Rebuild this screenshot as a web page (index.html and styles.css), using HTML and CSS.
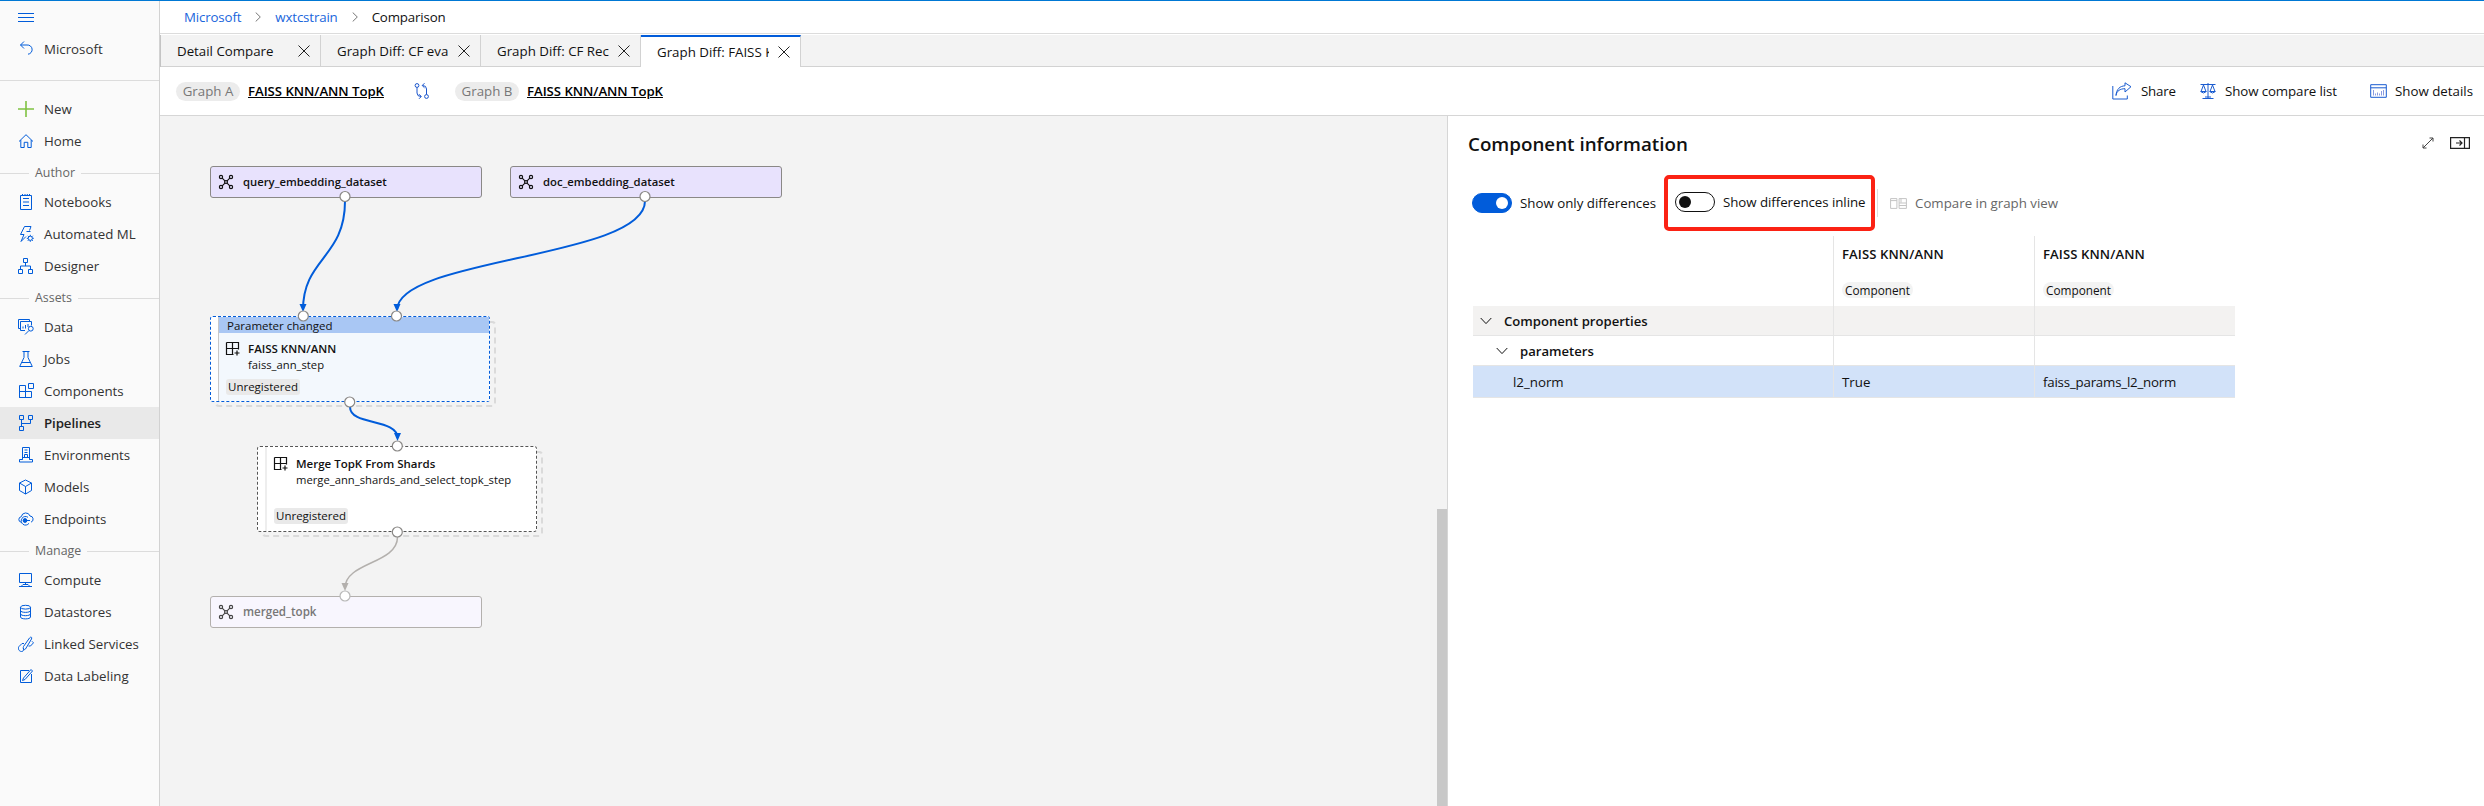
FILE: index.html
```html
<!DOCTYPE html>
<html lang="en">
<head>
<meta charset="utf-8">
<title>Comparison</title>
<link rel="stylesheet" href="styles.css">
</head>
<body>
<svg class="defs" width="0" height="0">
  <symbol id="close" viewBox="0 0 12 12"><path d="M.5.5l11 11M11.5.5l-11 11"/></symbol>
  <symbol id="chev" viewBox="0 0 6 10"><path d="M.7.5L5.3 5 .7 9.5"/></symbol>
  <symbol id="down" viewBox="0 0 12 8"><path d="M.7 1L6 6.6 11.3 1"/></symbol>
  <symbol id="dataset" viewBox="0 0 16 16"><g stroke-width="1.2"><circle cx="3" cy="3" r="1.6"/><circle cx="13" cy="3" r="1.6"/><circle cx="3" cy="13" r="1.6"/><circle cx="13" cy="13" r="1.6"/><rect x="6.7" y="6.7" width="2.6" height="2.6"/><path d="M4.2 4.2l2.5 2.5M11.8 4.2L9.3 6.7M4.2 11.8l2.5-2.5M11.8 11.8L9.3 9.3"/></g></symbol>
  <symbol id="module" viewBox="0 0 16 16"><path d="M1.500 1.500h12v7M1.500 1.500v12h7M1.500 7.500h12M7.500 1.500v12M12 9.500v5M9.500 12h5" stroke-width="1.2"/></symbol>
</svg>
<div class="app">
  <nav class="side">
    <div class="item menu"><svg class="ic" viewBox="0 0 16 16"><path d="M0 4.500h16M0 8.500h16M0 12.500h16"/></svg></div>
    <div class="item back"><svg class="ic" viewBox="0 0 16 16"><path d="M6 1.500L2.500 5 6 8.500M2.500 5H9a4.600 4.600 0 0 1 1 9.200"/></svg><span>Microsoft</span></div>
    <div class="rule"></div>
    <div class="item"><svg class="ic plus" viewBox="0 0 16 16"><path d="M0 8h16M8 0v16"/></svg><span>New</span></div>
    <div class="item"><svg class="ic" viewBox="0 0 16 16"><path d="M1 8.500L8 1.700l7 6.800M2.800 7v7.500h3.400V9.300h3.600v5.200h3.400V7"/></svg><span>Home</span></div>
    <div class="sep"><span>Author</span></div>
    <div class="item"><svg class="ic" viewBox="0 0 16 16"><path d="M2.500 1.500h11v14h-11zM5 4.500h6M5 8h6M5 11.500h6M4.500 0v2M7 0v2M9.300 0v2M11.500 0v2"/></svg><span>Notebooks</span></div>
    <div class="item"><svg class="ic" viewBox="0 0 16 16"><path d="M11.500 4.500L13 .5H6.500L2.500 8.500h3.500L3 15.500l5-5M8.500 5.500h4"/><circle cx="12.300" cy="12.300" r="2.100"/><path d="M12.300 8.800v1.300M12.300 14.500v1.300M8.800 12.300h1.300M14.500 12.300h1.300M9.800 9.800l1 1M13.800 13.800l1 1M14.800 9.800l-1 1M10.800 13.800l-1 1"/></svg><span>Automated ML</span></div>
    <div class="item"><svg class="ic" viewBox="0 0 16 16"><path d="M5.500.5h4v4h-4zM.5 11.500h4v4h-4zM10.500 11.500h4v4h-4zM7.500 4.500V8M2.500 11.500V8h10v3.500"/></svg><span>Designer</span></div>
    <div class="sep"><span>Assets</span></div>
    <div class="item"><svg class="ic" viewBox="0 0 16 16"><path d="M3 9.500H.5v-9h11V2M7 11.500H2.500v-9h11v4M5 9.500v-2M7.500 9.500v-3.500M10 8V5"/><circle cx="12.800" cy="9.700" r="2.400"/><path d="M11 11.500l-4 4"/></svg><span>Data</span></div>
    <div class="item"><svg class="ic" viewBox="0 0 16 16"><path d="M4.500.5h7M6 .5v6L1.700 15.500h12.600L10 6.500v-6M3.800 11.500h8.400"/></svg><span>Jobs</span></div>
    <div class="item"><svg class="ic" viewBox="0 0 16 16"><path d="M1.500 2.500h6v12h-6zM1.500 8.500h12v6h-12zM10.500.5h5v5h-5z"/></svg><span>Components</span></div>
    <div class="item on"><svg class="ic" viewBox="0 0 16 16"><path d="M1.500.5h4v4h-4zM10.500.5h4v4h-4zM1.500 11.500h4v4h-4zM3.500 4.500v7M3.500 8.500h9v-4"/></svg><span>Pipelines</span></div>
    <div class="item"><svg class="ic" viewBox="0 0 16 16"><path d="M4.500 12.500V.5h7v12M6.500 3h3M6.500 5.500h3M1.500 15v-2.500h3v-2h7v2h3V15zM6.500 10.500v-3h3v3"/></svg><span>Environments</span></div>
    <div class="item"><svg class="ic" viewBox="0 0 16 16"><path d="M7.500 1l6 3v7.500l-6 3.500-6-3.500V4zM1.500 4l6 3.500 6-3.500M7.500 7.500V15"/></svg><span>Models</span></div>
    <div class="item"><svg class="ic" viewBox="0 0 16 16"><path d="M3 11.200A2.800 2.800 0 0 1 3.300 5.700a4.500 4.500 0 0 1 8.700-.7 3.200 3.200 0 0 1 1 6.200M11 12.300a4.300 4.300 0 1 1-1-6"/><circle cx="7" cy="9.500" r="1.900" fill="#015cda"/><path d="M7 9.500h5"/></svg><span>Endpoints</span></div>
    <div class="sep"><span>Manage</span></div>
    <div class="item"><svg class="ic" viewBox="0 0 16 16"><path d="M1.500 1.500h12v9h-12zM7.500 10.500v2M3 14.500l2-2h5l2 2zM1 14.500h13"/></svg><span>Compute</span></div>
    <div class="item"><svg class="ic" viewBox="0 0 16 16"><ellipse cx="7.500" cy="3.200" rx="5" ry="1.900"/><path d="M2.500 3.200v9.800c0 2.500 10 2.500 10 0V3.200M2.500 6.500c0 2.500 10 2.500 10 0M2.500 9.800c0 2.500 10 2.500 10 0"/></svg><span>Datastores</span></div>
    <div class="item"><svg class="ic" viewBox="0 0 16 16"><path d="M5.500 10.500l6-8.500c1-1.500 3-1 2 1L7.500 13c-1 1.500-3 0-2-2.500zM6 7.500H4L1 10.500c-1.500 2 0 5 2.500 5s2-2 2-3.500M10.500 10h2l3-3.200-1.500-1.500"/></svg><span>Linked Services</span></div>
    <div class="item"><svg class="ic" viewBox="0 0 16 16"><path d="M11 2.500H2.500v12h11V6M13 1.500l1.500 1.500-7.500 8.500-2.500 1 1-2.500z"/></svg><span>Data Labeling</span></div>
  </nav>
  <main class="main">
    <div class="crumbs"><a>Microsoft</a><svg class="chev" width="6" height="10"><use href="#chev"/></svg><a>wxtcstrain</a><svg class="chev" width="6" height="10"><use href="#chev"/></svg><span>Comparison</span></div>
    <div class="tabs">
      <div class="tab first"><span>Detail Compare</span><svg width="12" height="12"><use href="#close"/></svg></div>
      <div class="tab"><span>Graph Diff: CF eva</span><svg width="12" height="12"><use href="#close"/></svg></div>
      <div class="tab"><span>Graph Diff: CF Rec</span><svg width="12" height="12"><use href="#close"/></svg></div>
      <div class="tab active"><span>Graph Diff: FAISS K</span><svg width="12" height="12"><use href="#close"/></svg></div>
    </div>
    <div class="bar">
      <span class="pill">Graph A</span><a class="gname">FAISS KNN/ANN TopK</a>
      <svg class="swap" width="16" height="18" viewBox="0 0 16 18"><circle cx="3" cy="3.500" r="1.900"/><path d="M3 5.400v5.600q0 3.500 4 3.500M5 12.200l2.300 2.300L5 16.800M12.500 12.500V7q0-3.500-4-3.500M10.500 1.200L8.200 3.500l2.300 2.300"/><circle cx="12.500" cy="14.500" r="1.900"/></svg>
      <span class="pill">Graph B</span><a class="gname">FAISS KNN/ANN TopK</a>
      <div class="acts">
        <div class="act"><svg width="20" height="18" viewBox="0 0 20 18"><path d="M.8 4v13h14.500v-3.500M4 13.500c.7-4.500 4-6.800 9-6.800V10l6-5.300L13 .8v3C8 4 4.500 7 4 13.500z"/></svg><span class="a1">Share</span></div>
        <div class="act"><svg width="16" height="17" viewBox="0 0 16 17"><path d="M.5 1.500h15M8 0v16M2.500 15.500h11M5 14h6M3.500 2l-2.500 6.500h5zM12.500 2L10 8.500h5zM.5 8.500q3 3 6 0M9.500 8.500q3 3 6 0"/></svg><span class="a2">Show compare list</span></div>
        <div class="act"><svg width="17" height="14" viewBox="0 0 17 14"><path d="M.7.7h15.600v12.600H.7zM.7 3.800h15.600"/><path class="faint" d="M3.500 6v5.500M5.500 9.500v2M7.500 8.500v3M9.500 9.500v2M11.500 7v4.500M13.500 6v5.500"/></svg><span class="a3">Show details</span></div>
      </div>
    </div>
    <div class="work">
      <div class="canvas">
        <div class="shadow sh1"></div><div class="shadow sh2"></div>
        <div class="node data n1"><svg width="16" height="16"><use href="#dataset"/></svg><span>query_embedding_dataset</span></div>
        <div class="node data n2"><svg width="16" height="16"><use href="#dataset"/></svg><span>doc_embedding_dataset</span></div>
        <div class="node step n3">
          <div class="body">
            <div class="band">Parameter changed</div>
            <div class="row"><svg width="16" height="16"><use href="#module"/></svg><div><b>FAISS KNN/ANN</b><p>faiss_ann_step</p></div></div>
            <span class="tag">Unregistered</span>
          </div>
        </div>
        <div class="node step n4">
          <div class="body">
            <div class="row"><svg width="16" height="16"><use href="#module"/></svg><div><b>Merge TopK From Shards</b><p>merge_ann_shards_and_select_topk_step</p></div></div>
            <span class="tag">Unregistered</span>
          </div>
        </div>
        <div class="node data n5 dim"><svg width="16" height="16"><use href="#dataset"/></svg><span>merged_topk</span></div>
        <svg class="edges" width="1277" height="690" viewBox="160 116 1277 690">
          <g class="e"><path d="M345 201C345 258 303 258 303 310"/><path d="M645 201C645 258 397 258 397 310"/><path d="M350 407C350 426 397.500 418 397.500 438"/></g>
          <g class="h"><path d="M299.500 304h7l-3.500 8zM393.500 304h7l-3.500 8zM394 433h7l-3.500 8z"/></g>
          <path class="eg" d="M397.500 537C397.500 564 345 562 345 588"/><path class="hg" d="M341.500 583h7l-3.500 8z"/>
          <g class="p"><circle cx="345" cy="196.500" r="5"/><circle cx="645" cy="196.500" r="5"/><circle cx="303.300" cy="316" r="5"/><circle cx="396.500" cy="316" r="5"/><circle cx="349.700" cy="402" r="5"/><circle cx="397.300" cy="446" r="5"/><circle cx="397.300" cy="532" r="5"/><circle class="pg" cx="345" cy="596" r="5"/></g>
        </svg>
        <div class="scroll"></div>
      </div>
      <section class="panel">
        <header class="head"><h2>Component information</h2>
          <svg width="12" height="12" viewBox="0 0 12 12"><path d="M1 11L11 1M7.500 1H11v3.500M1 7.500V11h3.500"/></svg>
          <svg class="dock" width="20" height="12" viewBox="0 0 20 12"><path d="M.6.6h18.800v10.800H.6zM14.500.6v10.800M6 6h6M9.500 3.500L12 6 9.500 8.500"/></svg>
        </header>
        <div class="toggles">
          <span class="sw onn"><i></i></span><span class="t1">Show only differences</span>
          <div class="box"><span class="sw"><i></i></span><span>Show differences inline</span></div>
          <div class="cmp"><svg width="17" height="11" viewBox="0 0 17 11"><path d="M.6.6h6.300v9.800H.6zM.6 2.600h6.300M9.100.6h7.300v9.800H9.100zM9.100 5h7.300M9.100 7.500h7.300M11 .6v4"/></svg><span>Compare in graph view</span></div>
        </div>
        <div class="grid">
          <div class="cell hd"></div>
          <div class="cell hd"><b>FAISS KNN/ANN</b><span class="chip">Component</span></div>
          <div class="cell hd"><b>FAISS KNN/ANN</b><span class="chip">Component</span></div>
          <div class="cell g lv1"><svg width="12" height="8"><use href="#down"/></svg><b>Component properties</b></div><div class="cell g"></div><div class="cell g"></div>
          <div class="cell lv2"><svg width="12" height="8"><use href="#down"/></svg><b>parameters</b></div><div class="cell"></div><div class="cell"></div>
          <div class="cell s lv3">l2_norm</div><div class="cell s">True</div><div class="cell s last">faiss_params_l2_norm</div>
        </div>
      </section>
    </div>
  </main>
</div>
</body>
</html>
```
FILE: styles.css
```css
*{box-sizing:border-box}
body{margin:0;font-family:"Open Sans","Noto Sans",sans-serif;font-size:13.3px;line-height:20px;color:#111;background:#fff}
span,a,b,p{white-space:nowrap}
svg{fill:none;stroke:currentColor;flex:none;display:block}
.defs{position:absolute}
.app{height:806px;display:flex;border-top:1px solid #0078d4;overflow:hidden}
.side{width:160px;flex:none;background:#fafafa;border-right:1px solid #d2d2d2;color:#333}
.item{height:32px;display:flex;align-items:center;padding-left:18px;gap:10px}
.item .ic{width:16px;height:16px;color:#015cda}
.item .plus{color:#7fc241;stroke-width:1.6}
.back .ic{margin-top:-2px}
.rule{height:1px;background:#dcdcdc;margin:15px 0 12px}
.sep{height:29px;display:flex;align-items:center;font-size:12.4px;color:#666;gap:6px;padding-top:4px}
.sep span{margin-top:-2px}
.sep::before{content:"";width:29px;height:1px;background:#dcdcdc}
.sep::after{content:"";flex:1;height:1px;background:#dcdcdc}
.on{background:#e9e9e9;font-weight:600;color:#222}
.on span{letter-spacing:-.1px}
.main{flex:1;min-width:0;display:flex;flex-direction:column}
.crumbs{height:33px;border-bottom:1px solid #dcdcdc;padding-left:24px;display:flex;align-items:center;letter-spacing:-.15px}
.crumbs a{color:#1a66dc}
.chev{color:#777;margin:0 14px}
.tabs{height:32px;margin-top:1px;display:flex;background:#f3f3f3;box-shadow:inset 0 -1px #d2d2d2}
.tab{width:160px;border-right:1px solid #d2d2d2;display:flex;align-items:center;justify-content:space-between;padding:0 10px 1px 16px}
.tab.first{width:161px;border-left:1px solid #c4c4c4}
.tab span{max-width:112px;overflow:hidden}
.tab.active{background:#fff;border-top:2px solid #015cda}
.tab svg{color:#222}
.bar{height:49px;border-bottom:1px solid #d6d6d6;display:flex;align-items:center;padding:0 12px 0 16px}
.pill{background:#ececec;color:#777;border-radius:10px;height:19px;line-height:19px;width:64px;text-align:center;margin-right:8px}
.gname{font-weight:600;font-size:13.2px;letter-spacing:-.05px;color:#000;width:141px;text-decoration:underline}
.swap{color:#1a55cc;margin:0 25px 0 25px}
.acts{margin-left:auto;display:flex}
.act{display:flex;align-items:center;gap:9px}
.act svg{color:#1a5cd0}
.a1{width:59px;letter-spacing:-.2px}
.a2{width:145px;letter-spacing:-.1px}
.a3{width:77px;margin-left:-1px}
.faint{stroke:#8a9be0}
.work{flex:1;display:flex;min-height:0}
.canvas{width:1287px;flex:none;background:#f3f3f3;position:relative;overflow:hidden}
.edges{position:absolute;left:0;top:0}
.e{stroke:#015cda;stroke-width:2}
.h{stroke:none;fill:#015cda}
.eg{stroke:#b3b0ad;stroke-width:1.5}
.hg{stroke:none;fill:#b3b0ad}
.p{fill:#fff;stroke:#8a8886;stroke-width:1.2}
.pg{stroke:#b8b8b8}
.node{position:absolute}
.data{width:272px;height:32px;border:1px solid #8a8886;border-radius:3px;background:#e8e2fd;display:flex;align-items:center;gap:9px;padding-left:7px;font-size:11.3px;font-weight:600}
.n1{left:50px;top:50px}
.n2{left:350px;top:50px}
.n3{left:50px;top:200px}
.n4{left:97px;top:330px}
.n5{left:50px;top:480px}
.dim{background:#f8f6fe;border-color:#b3b0ad;color:#777;font-size:11.6px}
.dim svg{color:#444}
.step{width:280px;height:86px;border:1px dashed #555;border-radius:3px;background:#fff;padding-left:7px;font-size:11.5px}
.n3{border-color:#015cda}
.n3 .body{background:#f3f8fd;border-left:1px solid #c8c8c8}
.body{height:84px;border-left:2px solid #eee;display:flex;flex-direction:column}
.band{height:16px;line-height:17px;background:#a9c7f4;padding-left:8px}
.row{display:flex;gap:7px;padding:8px 0 0 6px;height:46px}
.row b{font-weight:600;display:block;line-height:16px}
.row p{margin:0;line-height:15px;font-size:11.25px}
.n4 .row{height:61px;padding-left:6px;padding-top:9px}
.tag{background:#e9e9e9;border-radius:3px;width:74px;height:16px;line-height:16px;text-align:center;margin-left:7px}
.shadow{position:absolute;width:281px;height:86px;border:2px dashed #dadada;border-radius:4px}
.sh1{left:55px;top:205px}
.sh2{left:102px;top:335px}
.scroll{position:absolute;right:0;top:393px;width:10px;height:297px;background:#c8c8c8}
.panel{flex:1;border-left:1px solid #d6d6d6;padding:14px 14px 0 20px;min-width:0}
.head{display:flex;align-items:center;height:28px;gap:16px;color:#444}
.head h2{margin:0 auto 0 0;font-size:18.8px;font-weight:600;color:#111;line-height:28px}
.head svg{stroke-width:1;margin-top:-2px}
.head .dock{color:#222;stroke-width:1.2}
.toggles{display:flex;align-items:center;margin-top:17px;height:56px;padding-left:4px}
.sw{width:40px;height:20px;border:1px solid #111;border-radius:10px;display:flex;align-items:center;padding:0 3px;margin-right:8px}
.sw i{width:12px;height:12px;border-radius:6px;background:#111}
.onn{background:#015cda;border-color:#015cda;justify-content:flex-end}
.onn i{background:#fff}
.t1{width:135px}
.box{margin-left:9px;width:211px;height:56px;border:4px solid #fb2214;border-radius:5px;display:flex;align-items:center;padding:0 0 2px 7px;letter-spacing:-.05px}
.cmp{margin-left:2px;height:28px;border-left:1px solid #ddd;padding-left:12px;display:flex;align-items:center;gap:8px;color:#666}
.cmp svg{color:#c4c4c4}
.grid{display:grid;grid-template-columns:360px 201px 201px;grid-template-rows:70px 30px 30px 32px;margin:5px 0 0 5px;width:762px}
.cell{border-bottom:1px solid #e5e5e5;border-left:1px solid #e5e5e5;padding-left:8px;display:flex;align-items:center}
.cell:nth-child(3n+1){border-left:0}
.cell b{font-weight:600;font-size:13.1px}
.hd{border-bottom:0;flex-direction:column;align-items:flex-start;padding-top:8px}
.cell.hd b{font-size:13.1px;letter-spacing:.1px}
.chip{background:#f3f3f3;border-radius:8px;height:16px;line-height:16px;width:71px;text-align:center;font-size:11.8px;margin-top:18px}
.g{background:#f3f2f1}
.s{background:#d2e2f9}
.last{letter-spacing:-.2px}
.lv1{padding-left:7px;gap:12px}
.lv2{padding-left:23px;gap:12px}
.lv3{padding-left:40px}
```
